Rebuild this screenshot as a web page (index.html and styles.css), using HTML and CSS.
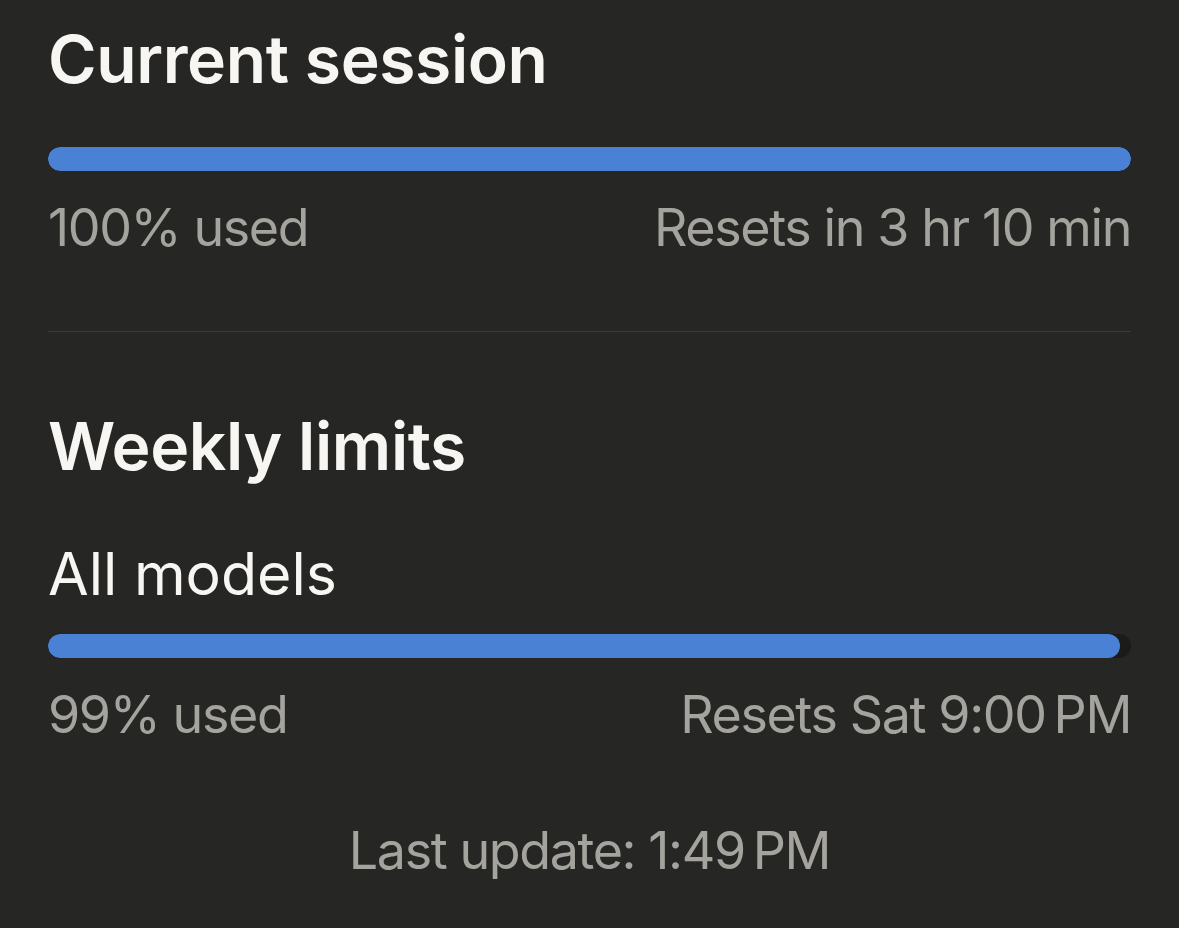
FILE: index.html
```html
<!DOCTYPE html>
<html lang="en">
<head>
<meta charset="utf-8">
<title>Usage</title>
<link rel="stylesheet" href="styles.css">
</head>
<body>
<main class="page">
  <section class="section">
    <h1 class="title">Current session</h1>
    <div class="track"><div class="fill" style="width:100%"></div></div>
    <div class="stats"><span>100% used</span><span>Resets in 3 hr 10 min</span></div>
  </section>
  <hr class="divider">
  <section class="section">
    <h2 class="title title-weekly">Weekly limits</h2>
    <div class="subtitle">All models</div>
    <div class="track track-2"><div class="fill" style="width:99%"></div></div>
    <div class="stats"><span>99% used</span><span>Resets Sat 9:00&#8201;PM</span></div>
  </section>
  <div class="updated">Last update: 1:49&#8201;PM</div>
</main>
</body>
</html>
```

FILE: styles.css
```css
html, body {
  margin: 0;
  padding: 0;
  background: #262624;
  height: 100%;
}
body {
  font-family: Inter, "Noto Sans", sans-serif;
  color: #a5a39d;
}
.page {
  padding: 19px 48px 0;
  display: flex;
  flex-direction: column;
}
.section {
  display: flex;
  flex-direction: column;
}
.title {
  margin: 0;
  font-size: 66px;
  line-height: 80px;
  font-weight: 600;
  color: #f7f6f2;
  letter-spacing: -0.4px;
}
.title-weekly {
  margin-top: 74px;
}
.track {
  margin-top: 48px;
  height: 24px;
  border-radius: 12px;
  background: #1b1b1a;
  overflow: hidden;
}
.track-2 {
  margin-top: 24px;
}
.fill {
  height: 100%;
  border-radius: 12px;
  background: #4a81d5;
}
.stats {
  margin-top: 25px;
  display: flex;
  justify-content: space-between;
  font-size: 52px;
  line-height: 63px;
  letter-spacing: -1.4px;
}
.divider {
  margin: 72px 0 0;
  border: 0;
  height: 1px;
  background: #3b3b38;
}
.subtitle {
  margin-top: 52px;
  font-size: 59px;
  line-height: 72px;
  color: #f7f6f2;
}
.updated {
  margin-top: 73px;
  text-align: center;
  font-size: 52px;
  line-height: 63px;
  letter-spacing: -1.4px;
}
```
